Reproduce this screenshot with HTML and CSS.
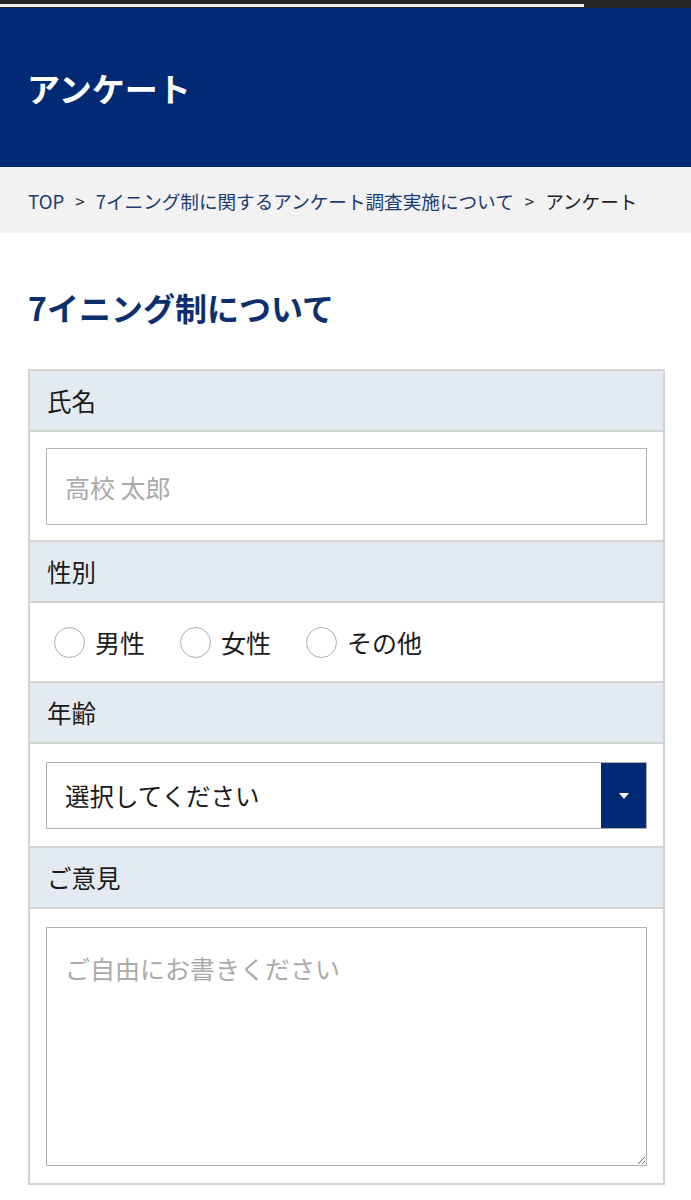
FILE: index.html
```html
<!DOCTYPE html>
<html lang="ja">
<head>
<meta charset="utf-8">
<title>アンケート</title>
<link rel="stylesheet" href="styles.css">
</head>
<body>
<div class="topbar"><div class="topbar-progress"></div></div>
<header class="page-header">
  <h1 class="page-title">アンケート</h1>
</header>
<nav class="breadcrumb">
  <a class="crumb-link" href="#">TOP</a>
  <span class="crumb-sep">&gt;</span>
  <a class="crumb-link" href="#">7イニング制に関するアンケート調査実施について</a>
  <span class="crumb-sep">&gt;</span>
  <span class="crumb-current">アンケート</span>
</nav>
<main class="content">
  <h2 class="section-title">7イニング制について</h2>
  <form class="survey">
    <div class="row-label">氏名</div>
    <div class="row-field field-name">
      <input class="text-input" type="text" placeholder="高校 太郎">
    </div>
    <div class="row-label">性別</div>
    <div class="row-field radios">
      <label class="radio"><input type="radio" name="sex"><span class="radio-dot"></span>男性</label>
      <label class="radio"><input type="radio" name="sex"><span class="radio-dot"></span>女性</label>
      <label class="radio"><input type="radio" name="sex"><span class="radio-dot"></span>その他</label>
    </div>
    <div class="row-label">年齢</div>
    <div class="row-field field-age">
      <div class="select">
        <span class="select-text">選択してください</span>
        <span class="select-btn"><span class="select-arrow"></span></span>
      </div>
    </div>
    <div class="row-label">ご意見</div>
    <div class="row-field field-opinion">
      <textarea class="textarea" placeholder="ご自由にお書きください"></textarea>
    </div>
  </form>
</main>
</body>
</html>
```
FILE: styles.css
```css
* { box-sizing: border-box; }
html, body { margin: 0; padding: 0; }
body {
  font-family: "Noto Sans CJK JP", "Noto Sans", sans-serif;
  color: #222;
  background: #fff;
}
.topbar {
  height: 8px;
  background: #262626;
  padding-top: 4px;
}
.topbar-progress {
  width: 584px;
  height: 3px;
  background: #e9eef3;
}
.page-header {
  height: 159px;
  background: #002a73;
  display: flex;
  align-items: center;
  padding-left: 27px;
}
.page-title {
  margin: 0;
  color: #fff;
  font-size: 33px;
  font-weight: 700;
}
.breadcrumb {
  height: 66px;
  background: #f2f2f2;
  display: flex;
  align-items: center;
  padding-left: 28px;
  font-size: 18.6px;
  gap: 11px;
}
.crumb-link { color: #1b3b73; text-decoration: none; }
.crumb-sep { color: #333; font-size: 17px; }
.crumb-current { color: #222; }
.content { padding: 0 27px 0 28px; }
.section-title {
  margin: 0;
  padding: 52px 0 0;
  height: 136px;
  color: #0d2f6d;
  font-size: 32px;
  font-weight: 700;
  line-height: 44px;
}
.survey {
  border: 2px solid #d4d4d4;
  border-bottom: none;
  width: 637px;
}
.row-label {
  height: 61px;
  background: #e4eaf2;
  border-bottom: 2px solid #d4d4d4;
  display: flex;
  align-items: center;
  padding-left: 17px;
  font-size: 24.5px;
  color: #1a1a1a;
}
.row-field {
  border-bottom: 2px solid #d4d4d4;
  padding: 0 16px;
}
.field-name { padding-top: 16px; padding-bottom: 15px; }
.field-age { padding-top: 18px; padding-bottom: 17px; }
.field-opinion { padding-top: 18px; padding-bottom: 17px; }
.text-input {
  display: block;
  width: 100%;
  height: 77px;
  border: 1.5px solid #b5b5b5;
  padding: 0 18px;
  font-family: inherit;
  font-size: 25px;
  color: #222;
  background: #fff;
  outline: none;
}
.text-input::placeholder, .textarea::placeholder { color: #aaa; }
.radios {
  height: 80px;
  padding: 0 0 0 24px;
  display: flex;
  align-items: center;
  gap: 35px;
}
.radio {
  display: flex;
  align-items: center;
  gap: 10px;
  font-size: 25px;
  color: #1a1a1a;
}
.radio input { display: none; }
.radio-dot {
  width: 31px;
  height: 31px;
  border-radius: 50%;
  border: 1.5px solid #b0b0b0;
  background: #fff;
}
.select {
  height: 67px;
  border: 1.5px solid #b0b0b0;
  display: flex;
  align-items: stretch;
  font-size: 24.5px;
}
.select-text {
  flex: 1;
  display: flex;
  align-items: center;
  padding-left: 18px;
  color: #1a1a1a;
}
.select-btn {
  width: 45px;
  background: #002a73;
  display: flex;
  align-items: center;
  justify-content: center;
}
.select-arrow {
  width: 0;
  height: 0;
  border-left: 5px solid transparent;
  border-right: 5px solid transparent;
  border-top: 6px solid #fff;
}
.textarea {
  display: block;
  width: 100%;
  height: 239px;
  border: 1.5px solid #b0b0b0;
  padding: 18px 18px;
  font-family: inherit;
  font-size: 25px;
  line-height: 44px;
  resize: vertical;
  outline: none;
}
```
